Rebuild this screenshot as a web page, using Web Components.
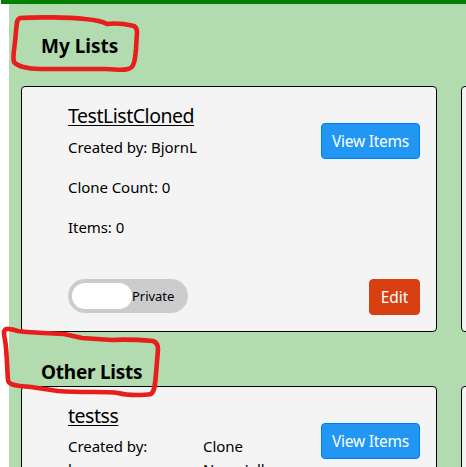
<!DOCTYPE html>
<html lang="en"><head><meta charset="utf-8"><title>Lists</title>
<style>html,body{margin:0;height:467px;overflow:hidden;background:#fff}</style></head>
<body><lists-page></lists-page>
<script>
const define=(name,html)=>customElements.define(name,class extends HTMLElement{
  constructor(){super();const t=document.createElement('template');t.innerHTML=html;this.attachShadow({mode:'open'}).append(t.content.cloneNode(true));}
});
define('action-button',`<style>
:host{display:flex;box-sizing:border-box;width:99px;height:36px;border:1px solid #007bff;border-radius:4px;background:#2196f3;color:#fff;align-items:center;justify-content:center;font-size:15.5px;letter-spacing:-.25px;white-space:nowrap}
:host([danger]){width:51px;background:#d84012;border-color:#d84012;letter-spacing:-.1px}
</style><span><slot></slot></span>`);
define('privacy-toggle',`<style>
:host{display:flex;box-sizing:border-box;width:120px;height:34px;padding:4px;border-radius:17px;background:#ccc;align-items:center;font-size:13px}
i{width:60px;height:26px;border-radius:13px;background:#fff}
span{letter-spacing:-.05px;padding-bottom:1px}
</style><i></i><span><slot></slot></span>`);
define('section-title',`<style>
:host{display:block;box-sizing:border-box;padding-left:20px;font-size:19px;line-height:30px;font-weight:700;letter-spacing:var(--title-track,-.25px)}
</style><slot></slot>`);
define('list-card',`<style>
:host{display:flex;box-sizing:border-box;width:416px;height:246px;border:1px solid #000;border-radius:4px;background:#f4f4f4;padding:14px 16px 16px 46px;justify-content:space-between}
.main{display:flex;flex-direction:column;width:250px;padding-bottom:2px}
h3{margin:0;font-size:19.5px;line-height:30px;font-weight:400;letter-spacing:-.47px;text-decoration:underline;text-decoration-thickness:1px;text-underline-offset:2px}
.side{display:flex;flex-direction:column;justify-content:space-between;padding-top:22px;align-items:flex-end}
.main slot:not([name]){display:block;flex:1}
</style><div class="main"><h3><slot name="title"></slot></h3><slot></slot><slot name="toggle"></slot></div><div class="side"><slot name="view"></slot><slot name="edit"></slot></div>`);
define('list-facts',`<style>
:host{display:grid;row-gap:16px;font-size:15px;line-height:24px;padding-top:4px;letter-spacing:-.06px}
:host([columns]){grid-template-columns:135px 100px;line-height:23px}
</style><slot></slot>`);
define('hand-marks',`<style>
:host{position:absolute;inset:0;pointer-events:none}svg{display:block}
</style><svg width="466" height="467" fill="none" stroke="#e81e1d" stroke-width="4.6" stroke-linecap="round" stroke-linejoin="round">
<path d="M20 18C35 17 68 17 85 19C96 20 102 21 107 24C115 23 125 24 134 26Q137 28 137 32L136 49C135 61 134 68 128 69C121 71 115 69 106 69L40 69C27 69 17 66 14 62C12 57 15 48 16 31C17 24 16 20 20 18Z"/>
<path d="M4 332C5 327 10 329 18 331C33 333 48 333 64 334L82 338L112 340C127 339 141 340 153 341Q158 343 158 349L156 374C155 387 154 392 151 394C146 395 129 396 118 393C105 391 84 393 58 391L31 387C16 386 8 385 8 380C7 369 7 351 5 340Q4 336 4 332Z"/>
</svg>`);
define('lists-page',`<style>
:host{display:block;position:relative;width:466px;height:467px;overflow:hidden;color:#000;font-family:"Noto Sans","Open Sans",sans-serif}
header{height:4px;margin-left:1px;background:#008000}
main{height:463px;margin-left:9px;padding-left:12px;background:#b2dbaf;overflow:hidden}
section{padding-top:27px;--title-track:0px}section+section{padding-top:25px;--title-track:-.25px}
.row{display:flex;gap:24px;width:900px;margin-top:25px}
section+section .row{margin-top:-1px}
</style><header></header><main>
<section><section-title>My Lists</section-title><div class="row">
<list-card><span slot="title">TestListCloned</span><list-facts><div>Created by: BjornL</div><div>Clone Count: 0</div><div>Items: 0</div></list-facts><privacy-toggle slot="toggle">Private</privacy-toggle><action-button slot="view">View Items</action-button><action-button slot="edit" danger>Edit</action-button></list-card><list-card></list-card></div></section>
<section><section-title>Other Lists</section-title><div class="row">
<list-card><span slot="title">testss</span><list-facts columns><div>Created by:<br>b</div><div>Clone<br>Name'ull</div></list-facts><action-button slot="view">View Items</action-button></list-card><list-card></list-card></div></section>
</main><hand-marks></hand-marks>`);
</script></body></html>
